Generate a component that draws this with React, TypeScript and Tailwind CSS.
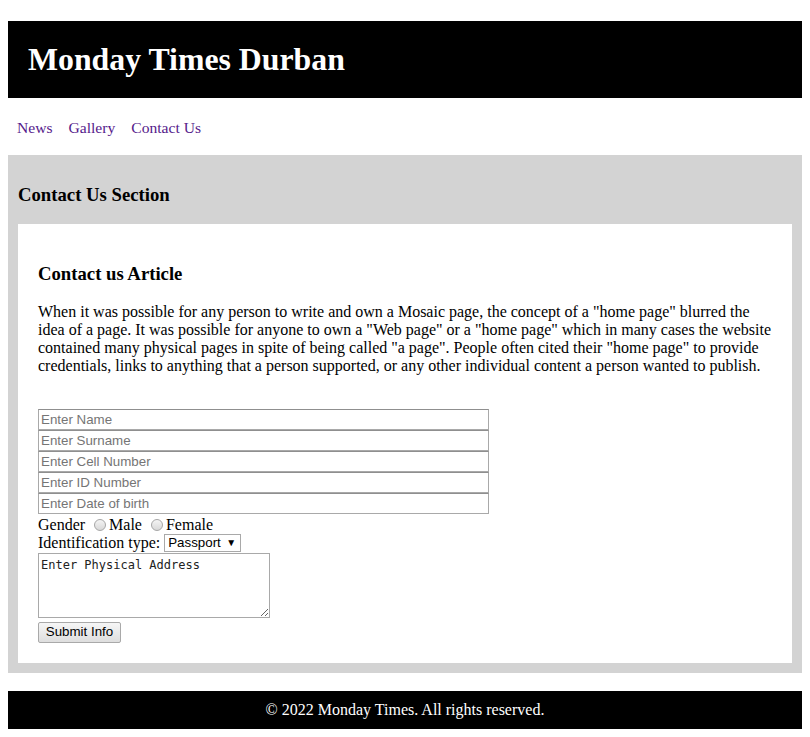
import React from "react";

const serif = "font-['Liberation_Serif',_'Times_New_Roman',_serif]";
const sans = "font-['Liberation_Sans',_Arial,_sans-serif]";

function Field({ placeholder }: { placeholder: string }) {
  return (
    <input
      type="text"
      placeholder={placeholder}
      className={`${sans} block w-[451px] h-[21px] border border-[#a9a9a9] border-t-[#8f8f8f] bg-white px-[2px] text-[13.33px] text-black placeholder:text-[#757575] outline-none`}
    />
  );
}

function Radio() {
  return (
    <span className="inline-block align-[-1px] ml-[5px] mr-[3px] w-[12px] h-[12px] rounded-full border border-[#a6a6a6] bg-gradient-to-b from-[#f4f4f4] to-[#d8d8d8]" />
  );
}

export default function App() {
  return (
    <div className={`${serif} bg-white text-black text-[16px] leading-[18px] px-[8px] pt-[21px] pb-[8px]`}>
      <header className="bg-black px-[20px] py-[20px]">
        <h1 className="text-white text-[31.8px] leading-[37px] font-bold">Monday Times Durban</h1>
      </header>

      <nav className="flex gap-[16px] pl-[9px] pt-[21px] pb-[18px] text-[15.6px]">
        <a href="#" className="text-[#551a8b]">News</a>
        <a href="#" className="text-[#551a8b]">Gallery</a>
        <a href="#" className="text-[#551a8b]">Contact Us</a>
      </nav>

      <section className="bg-[#d3d3d3] p-[10px]">
        <h3 className="text-[18.72px] leading-[21.5px] font-bold my-[18.72px]">Contact Us Section</h3>
        <article className="bg-white p-[20px]">
          <h3 className="text-[18.72px] leading-[21.5px] font-bold my-[18.72px]">Contact us Article</h3>
          <p className="text-[16px] leading-[18px]">
            When it was possible for any person to write and own a Mosaic page, the concept of a "home page" blurred the
            idea of a page. It was possible for anyone to own a "Web page" or a "home page" which in many cases the website
            contained many physical pages in spite of being called "a page". People often cited their "home page" to provide
            credentials, links to anything that a person supported, or any other individual content a person wanted to publish.
          </p>

          <form className="mt-[34px]" onSubmit={(e) => e.preventDefault()}>
            <Field placeholder="Enter Name" />
            <Field placeholder="Enter Surname" />
            <Field placeholder="Enter Cell Number" />
            <Field placeholder="Enter ID Number" />
            <Field placeholder="Enter Date of birth" />
            <div className="h-[20px] leading-[22px]">
              Gender <Radio />Male <Radio />Female
            </div>
            <div className="flex items-center h-[19px]">
              <span>Identification type:</span>
              <span className={`${sans} ml-[4px] inline-flex items-center justify-between w-[77px] h-[18px] pl-[3px] pr-[4px] border border-[#a9a9a9] bg-white text-[13.33px] leading-[16px]`}>
                Passport
                <span className="text-[10px]">▼</span>
              </span>
            </div>
            <textarea
              defaultValue="Enter Physical Address"
              className="block w-[232px] h-[65px] border border-[#a9a9a9] px-[2px] pt-[4px] font-['DejaVu_Sans_Mono',_monospace] text-[12px] leading-[15px] text-[#222] outline-none"
            />
            <button
              type="submit"
              className={`${sans} mt-[4px] block h-[21px] w-[83px] border border-[#a9a9a9] rounded-[2px] bg-gradient-to-b from-[#f6f6f6] to-[#dedede] text-[13.33px] text-black`}
            >
              Submit Info
            </button>
          </form>
        </article>
      </section>

      <footer className="mt-[18px] bg-black py-[10px] text-center text-white">
        © 2022 Monday Times. All rights reserved.
      </footer>
    </div>
  );
}
